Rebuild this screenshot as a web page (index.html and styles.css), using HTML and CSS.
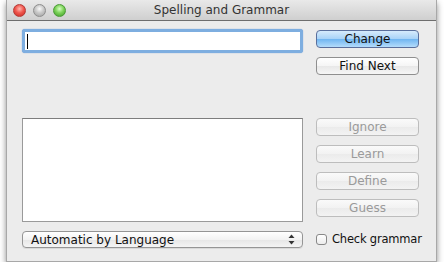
FILE: index.html
```html
<!DOCTYPE html>
<html>
  <head>
    <meta charset="UTF-8" />
    <title>Spelling and Grammar</title>
    <link rel="stylesheet" href="styles.css">
  </head>

  <body>
    <div class="window">
      <div class="titlebar">
        <div class="lights">
          <span class="light red"></span>
          <span class="light grey"></span>
          <span class="light green"></span>
        </div>
        <div class="title">Spelling and Grammar</div>
      </div>
      <div class="content">
        <div class="col-left">
          <div class="field"><span class="caret"></span></div>
          <div class="list"></div>
          <div class="popup">
            <span>Automatic by Language</span>
            <svg class="arrows" width="7" height="11" viewBox="0 0 7 11">
              <path d="M3.5 0.5 L6.5 4 L0.5 4 Z" fill="#333" />
              <path d="M3.5 10.5 L6.5 7 L0.5 7 Z" fill="#333" />
            </svg>
          </div>
        </div>
        <div class="col-right">
          <div class="btn default">Change</div>
          <div class="btn next">Find Next</div>
          <div class="btn disabled first">Ignore</div>
          <div class="btn disabled">Learn</div>
          <div class="btn disabled">Define</div>
          <div class="btn disabled">Guess</div>
          <label class="check">
            <span class="box"></span>
            <span class="check-label">Check grammar</span>
          </label>
        </div>
      </div>
    </div>
  </body>
</html>
```

FILE: styles.css
```css
html,
body {
  margin: 0;
  padding: 0;
  background: #fff;
}

body {
  font-family: 'DejaVu Sans', 'Liberation Sans', sans-serif;
  font-size: 12px;
  color: #111;
}

.window {
  width: 429px;
  height: 261px;
  margin-left: 6px;
  border: 1px solid #a8a8a8;
  border-top: none;
  background: #ececec;
  box-shadow: 0 3px 6px rgba(0, 0, 0, 0.45);
}

.titlebar {
  position: relative;
  height: 20px;
  border-bottom: 1px solid #6e6e6e;
  background: linear-gradient(#e9e9e9, #cfcfcf);
}

.lights {
  position: absolute;
  top: 4px;
  left: 6px;
  display: flex;
  gap: 7px;
}

.light {
  width: 13px;
  height: 13px;
  border-radius: 50%;
  box-sizing: border-box;
}

.light.red {
  border: 1px solid #b43a36;
  background: radial-gradient(circle at 50% 35%, #ffb8b0 0, #f0584f 45%, #c8261f 100%);
}

.light.grey {
  border: 1px solid #8e8e8e;
  background: radial-gradient(circle at 50% 35%, #fafafa 0, #c9c9c9 45%, #9d9d9d 100%);
}

.light.green {
  border: 1px solid #4a9a35;
  background: radial-gradient(circle at 50% 35%, #d8ffc4 0, #7ed35b 45%, #3c9a24 100%);
}

.title {
  text-align: center;
  line-height: 21px;
  font-size: 12px;
  color: #333;
}

.content {
  display: flex;
  padding-left: 15px;
}

.col-left {
  display: flex;
  flex-direction: column;
  width: 281px;
}

.field {
  margin-top: 8px;
  height: 18px;
  border: 3px solid #7eaee0;
  border-radius: 3px;
  background: #fff;
  box-shadow: 0 0 1px #5b8fcf;
}

.caret {
  display: block;
  width: 1px;
  height: 15px;
  margin: 2px 0 0 2px;
  background: #000;
}

.list {
  margin-top: 65px;
  height: 102px;
  border: 1px solid #9a9a9a;
  border-top-color: #7d7d7d;
  background: #fff;
}

.popup {
  display: flex;
  align-items: center;
  justify-content: space-between;
  margin-top: 9px;
  height: 15px;
  padding: 0 7px 0 8px;
  border: 1px solid #959595;
  border-radius: 4px;
  background: linear-gradient(#ffffff, #f3f3f3 50%, #e6e6e6 51%, #f4f4f4);
  box-shadow: 0 1px 0 rgba(0, 0, 0, 0.08);
}

.arrows {
  display: block;
}

.col-right {
  display: flex;
  flex-direction: column;
  width: 103px;
  margin-left: 13px;
}

.btn {
  height: 16px;
  margin-top: 9px;
  border: 1px solid #8f8f8f;
  border-radius: 4px;
  line-height: 16px;
  text-align: center;
  background: linear-gradient(#ffffff, #f5f5f5 50%, #e8e8e8 51%, #f6f6f6);
}

.btn.default {
  border-color: #5a6f9c;
  background: linear-gradient(#d6ebfc, #a7d2f7 50%, #6fb5f1 51%, #b4dcfb);
}

.btn.disabled {
  color: #9a9a9a;
  border-color: #bdbdbd;
  background: linear-gradient(#fafafa, #f2f2f2 50%, #ebebeb 51%, #f3f3f3);
}

.btn.first {
  margin-top: 43px;
}

.check {
  display: flex;
  align-items: center;
  gap: 5px;
  margin-top: 16px;
  height: 12px;
  white-space: nowrap;
}

.check-label {
  font-size: 11.5px;
  letter-spacing: -0.2px;
}

.box {
  flex: none;
  width: 11px;
  height: 11px;
  box-sizing: border-box;
  border: 1px solid #888;
  border-radius: 3px;
  background: linear-gradient(#fff, #ececec);
}
```
